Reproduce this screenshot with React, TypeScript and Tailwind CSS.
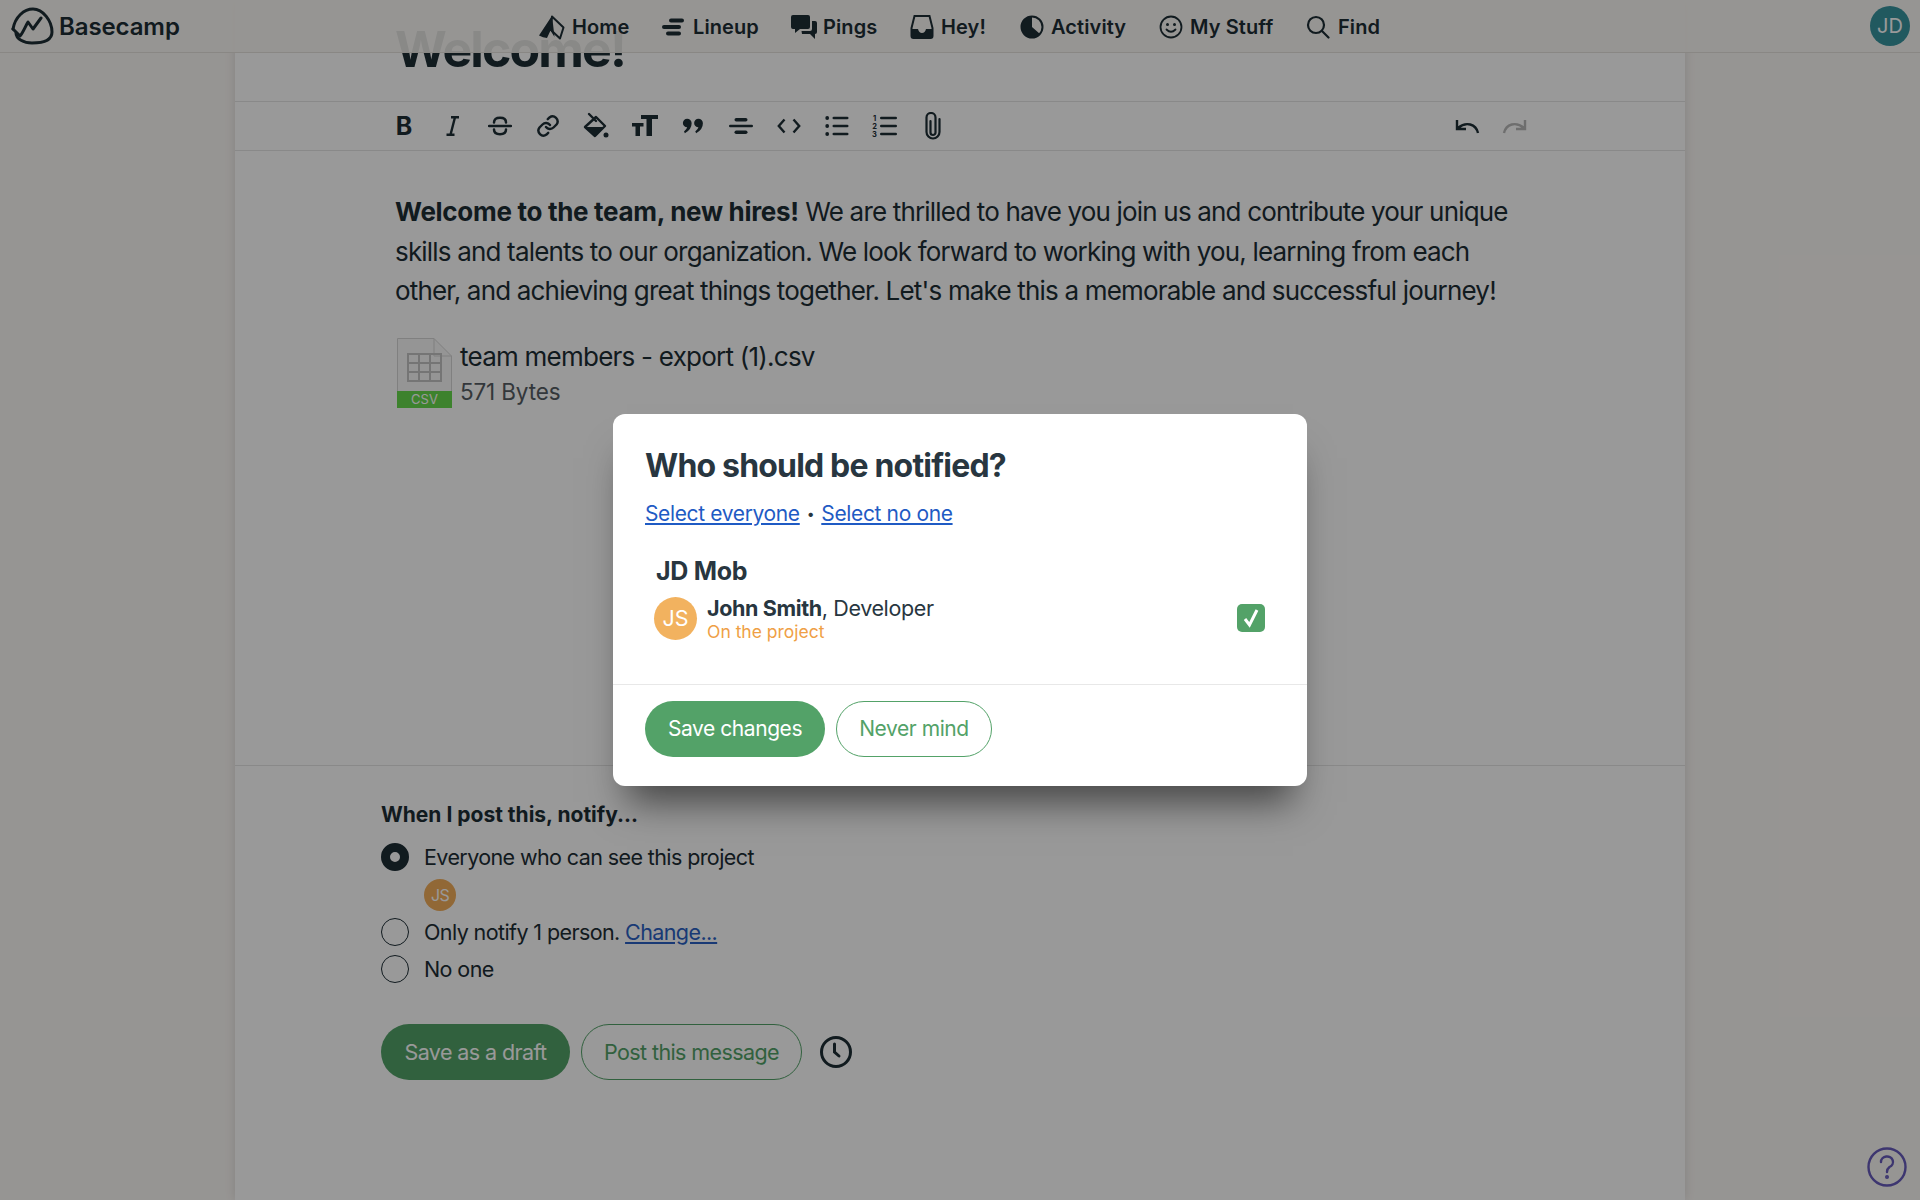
import { type ReactNode } from "react";

const FONT = "font-['Inter','Liberation_Sans',sans-serif]";

const NAV_ITEMS: { label: string; width: string; icon: ReactNode }[] = [
  {
    label: "Home",
    width: "w-[124px] gap-[7px]",
    icon: (
      <svg width="27" height="25" viewBox="0 0 27 25">
        <path d="M14 1.5 L25.5 12.5 L22 23.5 L13 15 Z" fill="#fbf8f5" stroke="#1d2d35" strokeWidth="2" strokeLinejoin="round" />
        <path d="M13.5 1.5 L1 20.5 Q5 22.5 9 23 L12.5 15.5 L16.5 22 L15 9 Z" fill="#1d2d35" />
      </svg>
    ),
  },
  {
    label: "Lineup",
    width: "w-[129px] gap-[9px]",
    icon: (
      <svg width="22" height="18" viewBox="0 0 22 18" fill="#1d2d35">
        <rect x="7" y="0.5" width="15" height="4" rx="2" />
        <rect x="0" y="7" width="19" height="4" rx="2" />
        <rect x="4" y="13.5" width="15" height="4" rx="2" />
      </svg>
    ),
  },
  {
    label: "Pings",
    width: "w-[119px] gap-[6px]",
    icon: (
      <svg width="26" height="26" viewBox="0 0 26 26" fill="#1d2d35">
        <path d="M2 1 H17 a2 2 0 0 1 2 2 V13 a2 2 0 0 1 -2 2 H9 L4 19 V15 H2 a2 2 0 0 1 -2 -2 V3 a2 2 0 0 1 2 -2 Z" />
        <path d="M21 7 H24 a2 2 0 0 1 2 2 V18 a2 2 0 0 1 -2 2 V25 L19 20 H11 L10.5 17 H19 a2 2 0 0 0 2 -2 Z" />
      </svg>
    ),
  },
  {
    label: "Hey!",
    width: "w-[110px] gap-[7px]",
    icon: (
      <svg width="24" height="26" viewBox="0 0 24 26">
        <path d="M4.5 2 H19.5 L22.5 14 V22 a2 2 0 0 1 -2 2 H3.5 a2 2 0 0 1 -2 -2 V14 Z" fill="none" stroke="#1d2d35" strokeWidth="2" />
        <path d="M1.5 15 H8 Q9 19 12 19 Q15 19 16 15 H22.5 V22 a2 2 0 0 1 -2 2 H3.5 a2 2 0 0 1 -2 -2 Z" fill="#1d2d35" />
      </svg>
    ),
  },
  {
    label: "Activity",
    width: "w-[139px] gap-[7px]",
    icon: (
      <svg width="24" height="24" viewBox="0 0 24 24">
        <circle cx="12" cy="12" r="10.5" fill="none" stroke="#1d2d35" strokeWidth="2" />
        <path d="M12 1.5 A10.5 10.5 0 1 0 20 19 L12 12 Z" fill="#1d2d35" />
      </svg>
    ),
  },
  {
    label: "My Stuff",
    width: "w-[147px] gap-[7px]",
    icon: (
      <svg width="24" height="24" viewBox="0 0 24 24" fill="none" stroke="#1d2d35" strokeWidth="1.8" strokeLinecap="round">
        <circle cx="12" cy="12" r="10.5" />
        <path d="M7.5 14.5 Q12 19 16.5 14.5" />
        <circle cx="8.5" cy="9.5" r="0.6" fill="#1d2d35" />
        <circle cx="15.5" cy="9.5" r="0.6" fill="#1d2d35" />
      </svg>
    ),
  },
  {
    label: "Find",
    width: "w-[80px] gap-[8px]",
    icon: (
      <svg width="24" height="24" viewBox="0 0 24 24" fill="none" stroke="#1d2d35" strokeWidth="2.2" strokeLinecap="round">
        <circle cx="10" cy="10" r="8" />
        <path d="M16 16 L22.5 22.5" />
      </svg>
    ),
  },
];

const TOOLBAR_ICONS: ReactNode[] = [
  <span className="text-[25px] leading-none font-bold">B</span>,
  <svg width="24" height="24" viewBox="0 0 24 24" stroke="#1d2d35" strokeWidth="2.4" fill="none">
    <path d="M11 3.2 H19 M6.5 20.8 H14.5 M15 3.2 L10.5 20.8" />
  </svg>,
  <svg width="24" height="24" viewBox="0 0 24 24" stroke="#1d2d35" strokeWidth="2.5" fill="none" strokeLinecap="round">
    <path d="M1 12 H23 M6 8.5 Q6 3.8 12 3.8 Q18 3.8 18 8.5 M6 15.5 Q6 20.2 12 20.2 Q18 20.2 18 15.5" />
  </svg>,
  <svg width="24" height="24" viewBox="0 0 24 24" stroke="#1d2d35" strokeWidth="2.4" fill="none" strokeLinecap="round">
    <path d="M10 13 a5 5 0 0 0 7.5 .5 l3 -3 a5 5 0 0 0 -7 -7 l-1.7 1.7" />
    <path d="M14 11 a5 5 0 0 0 -7.5 -.5 l-3 3 a5 5 0 0 0 7 7 l1.7 -1.7" />
  </svg>,
  <svg width="26" height="28" viewBox="0 0 26 28">
    <path d="M6 2 L13 9 M13 5 L22 14 L12 24 L2 15 Z" fill="none" stroke="#1d2d35" strokeWidth="2.4" strokeLinejoin="round" strokeLinecap="round" />
    <path d="M2 15 H21 L12 24 Z" fill="#1d2d35" />
    <circle cx="23" cy="23" r="2.5" fill="#1d2d35" />
  </svg>,
  <svg width="28" height="24" viewBox="0 0 28 24" fill="#1d2d35">
    <rect x="10" y="1" width="17" height="4" />
    <rect x="15.5" y="1" width="5.5" height="21" />
    <rect x="1" y="9" width="11.5" height="3.5" />
    <rect x="4.5" y="9" width="4.5" height="13" />
  </svg>,
  <svg width="22" height="18" viewBox="0 0 24 20" fill="#1d2d35">
    <path d="M5.5 2 a5 5 0 0 1 5 5 Q10.5 14 3 18 L2 16 Q5 14 5.5 11.5 a4.7 4.7 0 0 1 0 -9.5 Z" />
    <path d="M18 2 a5 5 0 0 1 5 5 Q23 14 15.5 18 L14.5 16 Q17.5 14 18 11.5 a4.7 4.7 0 0 1 0 -9.5 Z" />
  </svg>,
  <svg width="24" height="24" viewBox="0 0 24 24" fill="#1d2d35">
    <rect x="5.5" y="4" width="13" height="3.5" rx="1.75" />
    <rect x="0" y="10.8" width="24" height="2.4" rx="1.2" />
    <rect x="5.5" y="16.5" width="13" height="3.5" rx="1.75" />
  </svg>,
  <svg width="24" height="16" viewBox="0 0 24 16" fill="none" stroke="#1d2d35" strokeWidth="2.4">
    <path d="M7.5 1.5 L1.8 8 L7.5 14.5 M16.5 1.5 L22.2 8 L16.5 14.5" />
  </svg>,
  <svg width="24" height="22" viewBox="0 0 24 22" fill="#1d2d35">
    <circle cx="2.2" cy="3" r="1.9" />
    <circle cx="2.2" cy="11" r="1.9" />
    <circle cx="2.2" cy="19" r="1.9" />
    <rect x="7.5" y="1.7" width="16" height="2.6" rx="1.3" />
    <rect x="7.5" y="9.7" width="16" height="2.6" rx="1.3" />
    <rect x="7.5" y="17.7" width="16" height="2.6" rx="1.3" />
  </svg>,
  <svg width="25" height="24" viewBox="0 0 25 24" fill="#1d2d35">
    <rect x="8" y="2.7" width="17" height="2.6" rx="1.3" />
    <rect x="8" y="10.7" width="17" height="2.6" rx="1.3" />
    <rect x="8" y="18.7" width="17" height="2.6" rx="1.3" />
    <text x="2.5" y="7" fontSize="7.5" fontWeight="700" textAnchor="middle">1</text>
    <text x="2.5" y="15" fontSize="7.5" fontWeight="700" textAnchor="middle">2</text>
    <text x="2.5" y="23" fontSize="7.5" fontWeight="700" textAnchor="middle">3</text>
  </svg>,
  <svg width="16" height="28" viewBox="0 0 16 28" fill="none" stroke="#1d2d35" strokeWidth="2.2" strokeLinecap="round">
    <path d="M5.5 9 V20.5 a2.5 2.5 0 0 0 5 0 V5.5 a4.5 4.5 0 0 0 -9 0 V20 a6.5 6.5 0 0 0 13 0 V7" />
  </svg>,
];

function ToolButton({ children }: { children: ReactNode }) {
  return <span className="w-[48.1px] h-full flex items-center justify-center text-[#1d2d35]">{children}</span>;
}

function Radio({ checked, children }: { checked?: boolean; children: ReactNode }) {
  return (
    <label className="flex items-center gap-[15px] h-[28px]">
      {checked ? (
        <span className="w-7 h-7 rounded-full border-[9px] border-[#1d2d35] bg-white" />
      ) : (
        <span className="w-7 h-7 rounded-full border border-[#1d2d35] bg-white" />
      )}
      <span>{children}</span>
    </label>
  );
}

export default function App() {
  return (
    <div className={`${FONT} relative h-[1200px] overflow-hidden bg-[#fbf8f5] text-[#1d2d35]`}>
      <header className="absolute inset-x-0 top-0 z-10 h-[53px] flex items-center justify-between bg-[#fbf8f5]/90 border-b border-[#e4e1dc] pl-[11px] pr-[10px]">
        <div className="flex items-center gap-[5px]">
          <svg width="43" height="38" viewBox="0 0 43 38" fill="none" stroke="#1d2d35" strokeWidth="3" strokeLinecap="round" strokeLinejoin="round">
            <path d="M2 22 C4 10 13 2 22 2 C32 2 41 14 41 25 C41 33 32 36 21 36 C13 36 5 32 5 26" />
            <path d="M2 22 L9 29 C12 26 15 18 17 15 L22 22 L30 11" />
          </svg>
          <span className="mt-[2px] text-[24px] font-semibold tracking-[-0.1px]">Basecamp</span>
        </div>
        <nav className="absolute left-[538px] top-0 h-[54px] flex items-center">
          {NAV_ITEMS.map((item) => (
            <a key={item.label} className={`${item.width} flex items-center text-[20px] font-semibold tracking-[0.1px]`}>
              {item.icon}
              {item.label}
            </a>
          ))}
        </nav>
        <div className="w-10 h-10 rounded-full bg-[#38949f] text-white text-[20px] flex items-center justify-center">JD</div>
      </header>

      {/* Message editor */}
      <main className="mx-auto w-[1450px] h-[1200px] bg-white shadow-[0_0_10px_rgba(0,0,0,0.12)] flex flex-col">
        <div className="h-[102px] shrink-0 border-b border-[#e5e5e5] pl-[160px] pt-[19px]">
          <h1 className="text-[50px] leading-[60px] font-bold tracking-[-1.9px]">Welcome!</h1>
        </div>
        <div className="h-[49px] shrink-0 border-b border-[#e5e5e5] pl-[145px] pr-[146px] flex items-center justify-between">
          <div className="h-full flex items-center">
            {TOOLBAR_ICONS.map((icon, i) => (
              <ToolButton key={i}>{icon}</ToolButton>
            ))}
          </div>
          <div className="h-full flex items-center">
            <ToolButton>
              <svg width="26" height="16" viewBox="0 0 26 16" fill="none" stroke="#1d2d35" strokeWidth="2.4">
                <path d="M24 15 C22 6 12 3 4 10 M3 2 V11 H12" />
              </svg>
            </ToolButton>
            <ToolButton>
              <svg width="26" height="16" viewBox="0 0 26 16" fill="none" stroke="#b8b8b8" strokeWidth="2.4">
                <path d="M2 15 C4 6 14 3 22 10 M23 2 V11 H14" />
              </svg>
            </ToolButton>
          </div>
        </div>

        <div className="h-[615px] shrink-0 border-b border-[#e5e5e5] pl-[160px] pr-[150px] pt-[41px]">
          <p className="text-[26px] leading-[39.6px] tracking-[-0.82px]">
            <strong className="font-bold tracking-[-0.3px]">Welcome to the team, new hires!</strong> We are thrilled to have you join us and contribute your unique skills and talents to our organization. We look forward to working with you, learning from each other, and achieving great things together. Let's make this a memorable and successful journey!
          </p>
          <div className="mt-[27px] flex gap-[8px] pl-[2px]">
            <div className="relative w-[55px] h-[70px]">
              <svg className="absolute inset-0" width="55" height="70" viewBox="0 0 55 70" fill="#f8f8f8" stroke="#d6d6d6">
                <path d="M0.5 0.5 H37 L54.5 18 V69.5 H0.5 Z" />
                <path d="M37 0.5 V18 H54.5" fill="none" />
              </svg>
              <svg className="absolute left-[10px] top-[15px]" width="35" height="29" viewBox="0 0 35 29" fill="none" stroke="#c4c4c4" strokeWidth="2">
                <path d="M1 1 H34 V28 H1 Z M1 10 H34 M1 19 H34 M12 1 V28 M23 1 V28" />
              </svg>
              <div className="absolute inset-x-0 bottom-0 h-[17px] bg-[#66d94c] text-white text-[13px] leading-[17px] text-center">CSV</div>
            </div>
            <div>
              <div className="text-[26px] leading-[38px] tracking-[-0.76px]">team members - export (1).csv</div>
              <div className="text-[22.5px] leading-[32px] tracking-[-0.15px] text-[#555d63]">571 Bytes</div>
            </div>
          </div>
        </div>

        <div className="pl-[146px] pt-[36px] text-[21.5px] tracking-[-0.6px]">
          <div className="font-bold text-[21px] leading-[26px] mb-[15px] tracking-[0px]">When I post this, notify...</div>
          <Radio checked>Everyone who can see this project</Radio>
          <div className="ml-[43px] mt-[8px] mb-[7px] w-8 h-8 rounded-full bg-[#f2ae5b] text-white text-[16px] flex items-center justify-center">JS</div>
          <Radio>
            Only notify 1 person. <a className="text-[#2a5fc4] underline">Change...</a>
          </Radio>
          <div className="mt-[9px]">
            <Radio>No one</Radio>
          </div>
          <div className="mt-[41px] flex items-center gap-[11px]">
            <button className="h-[56px] w-[189px] rounded-full bg-[#53a268] text-white">Save as a draft</button>
            <button className="h-[56px] w-[221px] rounded-full border border-[#53a268] bg-white text-[#53a268]">Post this message</button>
            <svg className="ml-[6px]" width="34" height="34" viewBox="0 0 34 34" fill="none" stroke="#1d2d35" strokeWidth="3" strokeLinecap="round">
              <circle cx="17" cy="17" r="14.5" />
              <path d="M15.5 9 V17 L20 21" />
            </svg>
          </div>
        </div>
      </main>

      {/* Dimmed backdrop */}
      <div className="absolute inset-0 z-20 bg-black/40" />

      {/* Help button */}
      <svg className="absolute z-30 left-[1867px] top-[1147px]" width="40" height="40" viewBox="0 0 40 40" fill="none" stroke="#3d3670" strokeWidth="2.4" strokeLinecap="round">
        <circle cx="20" cy="20" r="18.5" />
        <path d="M14 15 a6 5.5 0 1 1 8.5 5 C20.5 21.5 20 22.5 20 25" />
        <circle cx="20" cy="30" r="0.8" fill="#3d3670" />
      </svg>

      {/* Notify dialog */}
      <div className="absolute z-30 left-[613px] top-[414px] w-[694px] h-[372px] rounded-xl bg-white text-[#283640] shadow-[0_30px_36px_-14px_rgba(0,0,0,0.55)] flex flex-col">
        <div className="flex-1 px-[32px] pt-[32px]">
          <h2 className="text-[32px] leading-[40px] font-bold tracking-[-0.82px]">Who should be notified?</h2>
          <div className="mt-[14px] text-[21px] leading-[28px] flex items-center tracking-[-0.36px]">
            <a className="text-[#1f5bc4] underline">Select everyone</a>
            <span className="mx-[7px] text-[14px]">•</span>
            <a className="text-[#1f5bc4] underline">Select no one</a>
          </div>
          <div className="mt-[28px] pl-[11px] text-[25px] leading-[30px] font-bold tracking-[-0.3px]">JD Mob</div>
          <div className="mt-[7px] pl-[9px] flex items-center gap-[10px]">
            <div className="w-[43px] h-[43px] rounded-full bg-[#f2b25f] text-white text-[21.5px] flex items-center justify-center">JS</div>
            <div className="flex-1 pt-[2px]">
              <div className="text-[21.5px] leading-[26px] tracking-[-0.37px]">
                <strong className="font-bold">John Smith</strong>, Developer
              </div>
              <div className="text-[17.5px] leading-[22px] text-[#ef9f46]">On the project</div>
            </div>
            <div className="mr-[10px] w-[28px] h-[28px] rounded-[5px] bg-[#53a268] flex items-center justify-center">
              <svg width="18" height="20" viewBox="0 0 18 20" fill="none" stroke="white" strokeWidth="3">
                <path d="M3 11 L7.5 17 L15 2" />
              </svg>
            </div>
          </div>
        </div>
        <div className="h-[102px] border-t border-[#e8e8e8] px-[32px] pt-[16px] flex gap-[11px] text-[21px] tracking-[-0.43px]">
          <button className="h-[56px] w-[180px] rounded-full bg-[#53a268] text-white">Save changes</button>
          <button className="h-[56px] w-[156px] rounded-full border border-[#53a268] text-[#53a268]">Never mind</button>
        </div>
      </div>
    </div>
  );
}
